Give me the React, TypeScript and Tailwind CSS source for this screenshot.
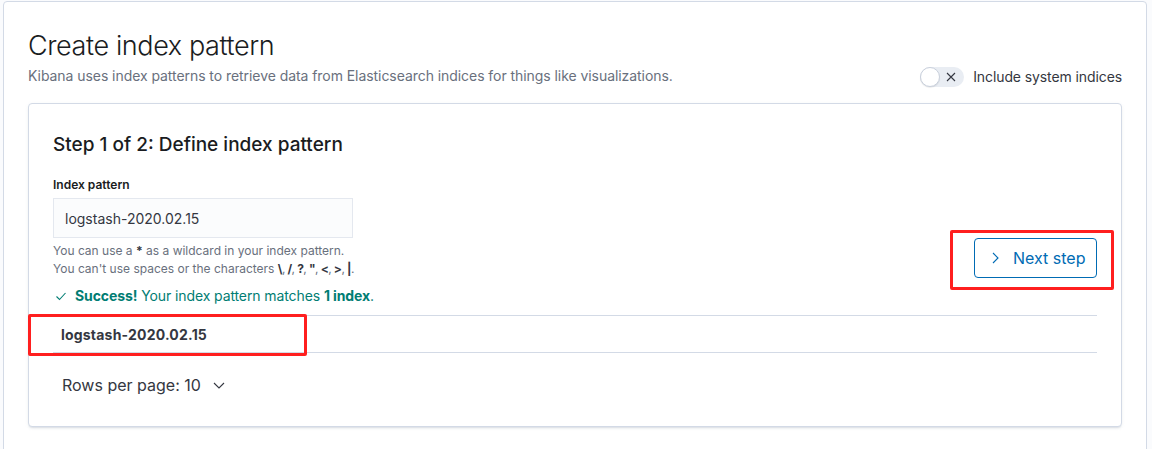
import React from "react";

const chars = ["\\", "/", "?", '"', "<", ">", "|"];

export default function App() {
  return (
    <div className="relative w-[1152px] h-[449px] overflow-hidden bg-[#fafbfd] font-['Inter',sans-serif]">
      <div className="ml-[3px] mt-px w-[1144px] h-[470px] rounded-[4px] border border-[#d3dae6] bg-white px-[24px] pt-[26px]">
        {/* header */}
        <div className="flex items-end justify-between">
          <div className="flex flex-col">
            <h1 className="h-[36px] text-[27px] font-light leading-[36px] text-[#1a1c21] tracking-[-0.4px]">
              Create index pattern
            </h1>
            <p className="mt-[2px] text-[14px] leading-[20px] text-[#69707d] tracking-[-0.06px]">
              Kibana uses index patterns to retrieve data from Elasticsearch indices for things like visualizations.
            </p>
          </div>
          <div className="mb-[-1px] flex items-center gap-[9px]">
            <div className="relative h-[20px] w-[44px] rounded-full bg-[#e9edf3]">
              <div className="absolute left-0 top-0 h-[20px] w-[20px] rounded-full border border-[#c9d0dc] bg-white shadow-[0_1px_1px_rgba(0,0,0,0.08)]" />
              <svg className="absolute left-[26px] top-[5px]" width="10" height="10" viewBox="0 0 10 10">
                <path d="M1 1 L9 9 M9 1 L1 9" stroke="#343741" strokeWidth="1.1" fill="none" />
              </svg>
            </div>
            <span className="text-[14px] leading-[20px] text-[#343741] tracking-[-0.1px]">Include system indices</span>
          </div>
        </div>

        {/* inner panel */}
        <div className="mt-[17px] h-[324px] rounded-[4px] border border-[#d3dae6] bg-white px-[24px] pt-[24px] shadow-[0_2px_2px_-1px_rgba(152,162,179,0.3),0_1px_5px_-2px_rgba(152,162,179,0.3)]">
          <h2 className="h-[34px] text-[19px] font-medium leading-[34px] text-[#1a1c21]">
            Step 1 of 2: Define index pattern
          </h2>
          <div className="mt-[14px] flex items-end justify-between">
            <div className="flex flex-col">
              <label className="h-[18px] text-[12px] font-semibold leading-[18px] text-[#1a1c21]">Index pattern</label>
              <div className="mt-[4px] flex h-[40px] w-[300px] items-center border border-[#e4e8ef] bg-[#fbfcfd] px-[11px] text-[14px] text-[#343741]">
                logstash-2020.02.15
              </div>
              <div className="mt-[4px] text-[12px] leading-[18px] text-[#69707d]">
                <div>
                  You can use a <strong className="font-bold text-[#343741]">*</strong> as a wildcard in your index pattern.
                </div>
                <div>
                  You can't use spaces or the characters{" "}
                  <span className="tracking-[-0.6px]">
                    {chars.map((c, i) => (
                      <React.Fragment key={i}>
                        <strong className="font-bold text-[#343741]">{c}</strong>
                        {i < chars.length - 1 ? ", " : "."}
                      </React.Fragment>
                    ))}
                  </span>
                </div>
              </div>
            </div>
            <button className="flex h-[40px] w-[123px] items-center rounded-[4px] border border-[#006bb4] bg-white pl-[12px] text-[16px] text-[#006bb4]">
              <svg width="16" height="16" viewBox="0 0 16 16" className="shrink-0">
                <path d="M6 3 L11 8 L6 13" stroke="#006bb4" strokeWidth="1.1" fill="none" />
              </svg>
              <span className="ml-[10px]">Next step</span>
            </button>
          </div>

          <div className="mt-[8px] flex h-[20px] items-center text-[14px] leading-[20px] text-[#017d73] tracking-[-0.1px]">
            <svg width="12" height="12" viewBox="0 0 12 12" className="ml-[2px] mr-[8px]">
              <path d="M1.5 6.5 L4.5 9.5 L10.5 3" stroke="#017d73" strokeWidth="1.1" fill="none" />
            </svg>
            <span>
              <strong className="font-bold">Success!</strong> Your index pattern matches{" "}
              <strong className="font-bold">1 index</strong>.
            </span>
          </div>

          <div className="mt-[9px] flex h-[38px] items-center border-y border-[#d3dae6] pl-[8px] text-[14px] font-bold text-[#343741] tracking-[0.2px]">
            logstash-2020.02.15
          </div>

          <div className="mt-[22px] flex h-[20px] items-center pl-[9px] text-[16px] leading-[20px] text-[#343741]">
            <span>Rows per page: 10</span>
            <svg width="12" height="12" viewBox="0 0 12 12" className="ml-[12px]">
              <path d="M1 4 L6 9 L11 4" stroke="#343741" strokeWidth="1.1" fill="none" />
            </svg>
          </div>
        </div>
      </div>

      {/* annotation boxes */}
      <div className="pointer-events-none absolute left-[28px] top-[314px] h-[42px] w-[279px] rounded-[2px] border-[3px] border-[#ff1f1f]" />
      <div className="pointer-events-none absolute left-[950px] top-[230px] h-[60px] w-[164px] rounded-[2px] border-[3px] border-[#ff1f1f]" />
    </div>
  );
}
